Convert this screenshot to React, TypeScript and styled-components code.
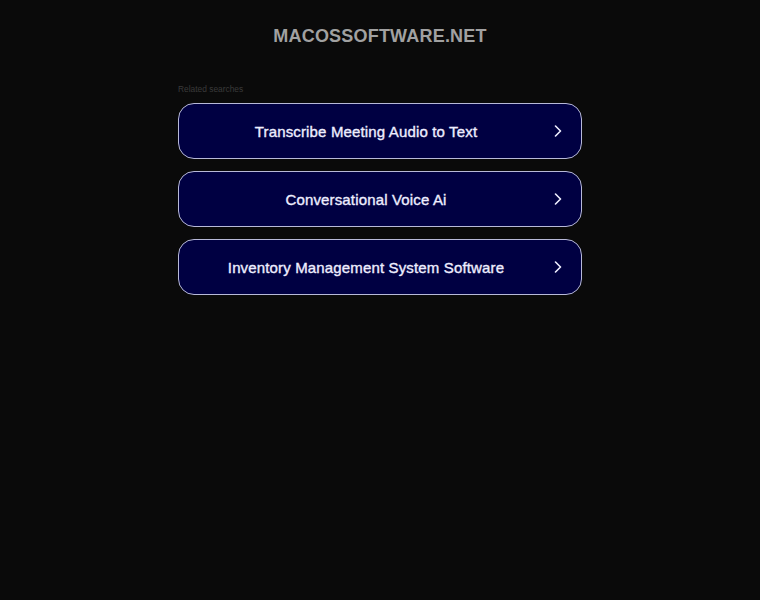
import styled, { createGlobalStyle } from "styled-components";

const GlobalStyle = createGlobalStyle`
  html, body {
    margin: 0;
    padding: 0;
    background: #0a0a0a;
  }
  body {
    font-family: "Liberation Sans", Arial, sans-serif;
  }
`;

const Page = styled.div`
  min-height: 600px;
  display: flex;
  flex-direction: column;
  align-items: center;
`;

const Domain = styled.h1`
  margin: 25px 0 0;
  font-size: 18px;
  line-height: 22px;
  font-weight: 700;
  letter-spacing: 0.2px;
  color: #a1a1a1;
`;

const Block = styled.div`
  width: 404px;
  margin-top: 36px;
  display: flex;
  flex-direction: column;
`;

const Caption = styled.div`
  font-size: 8.4px;
  line-height: 12px;
  color: #3a3a3a;
  margin-bottom: 8px;
`;

const List = styled.div`
  display: flex;
  flex-direction: column;
  gap: 12px;
`;

const Link = styled.a`
  position: relative;
  display: flex;
  align-items: center;
  justify-content: center;
  height: 56px;
  box-sizing: border-box;
  padding-right: 28px;
  border: 1px solid #b7b9d8;
  border-radius: 16px;
  background: #000042;
  color: #eeeeff;
  text-decoration: none;
  font-size: 15px;
  font-weight: 400;
  letter-spacing: 0.15px;
  -webkit-text-stroke: 0.35px #eeeeff;
  cursor: pointer;
`;

const Chevron = styled.svg`
  position: absolute;
  right: 19px;
  top: 50%;
  margin-top: -6px;
`;

const searches = [
  "Transcribe Meeting Audio to Text",
  "Conversational Voice Ai",
  "Inventory Management System Software",
];

export default function App() {
  return (
    <Page>
      <GlobalStyle />
      <Domain>MACOSSOFTWARE.NET</Domain>
      <Block>
        <Caption>Related searches</Caption>
        <List>
          {searches.map((s) => (
            <Link key={s}>
              {s}
              <Chevron width="8" height="12" viewBox="0 0 8 12" fill="none">
                <path d="M1.5 1 L6.5 6 L1.5 11" stroke="#eeeeff" strokeWidth="1.6" strokeLinecap="round" strokeLinejoin="round" />
              </Chevron>
            </Link>
          ))}
        </List>
      </Block>
    </Page>
  );
}
